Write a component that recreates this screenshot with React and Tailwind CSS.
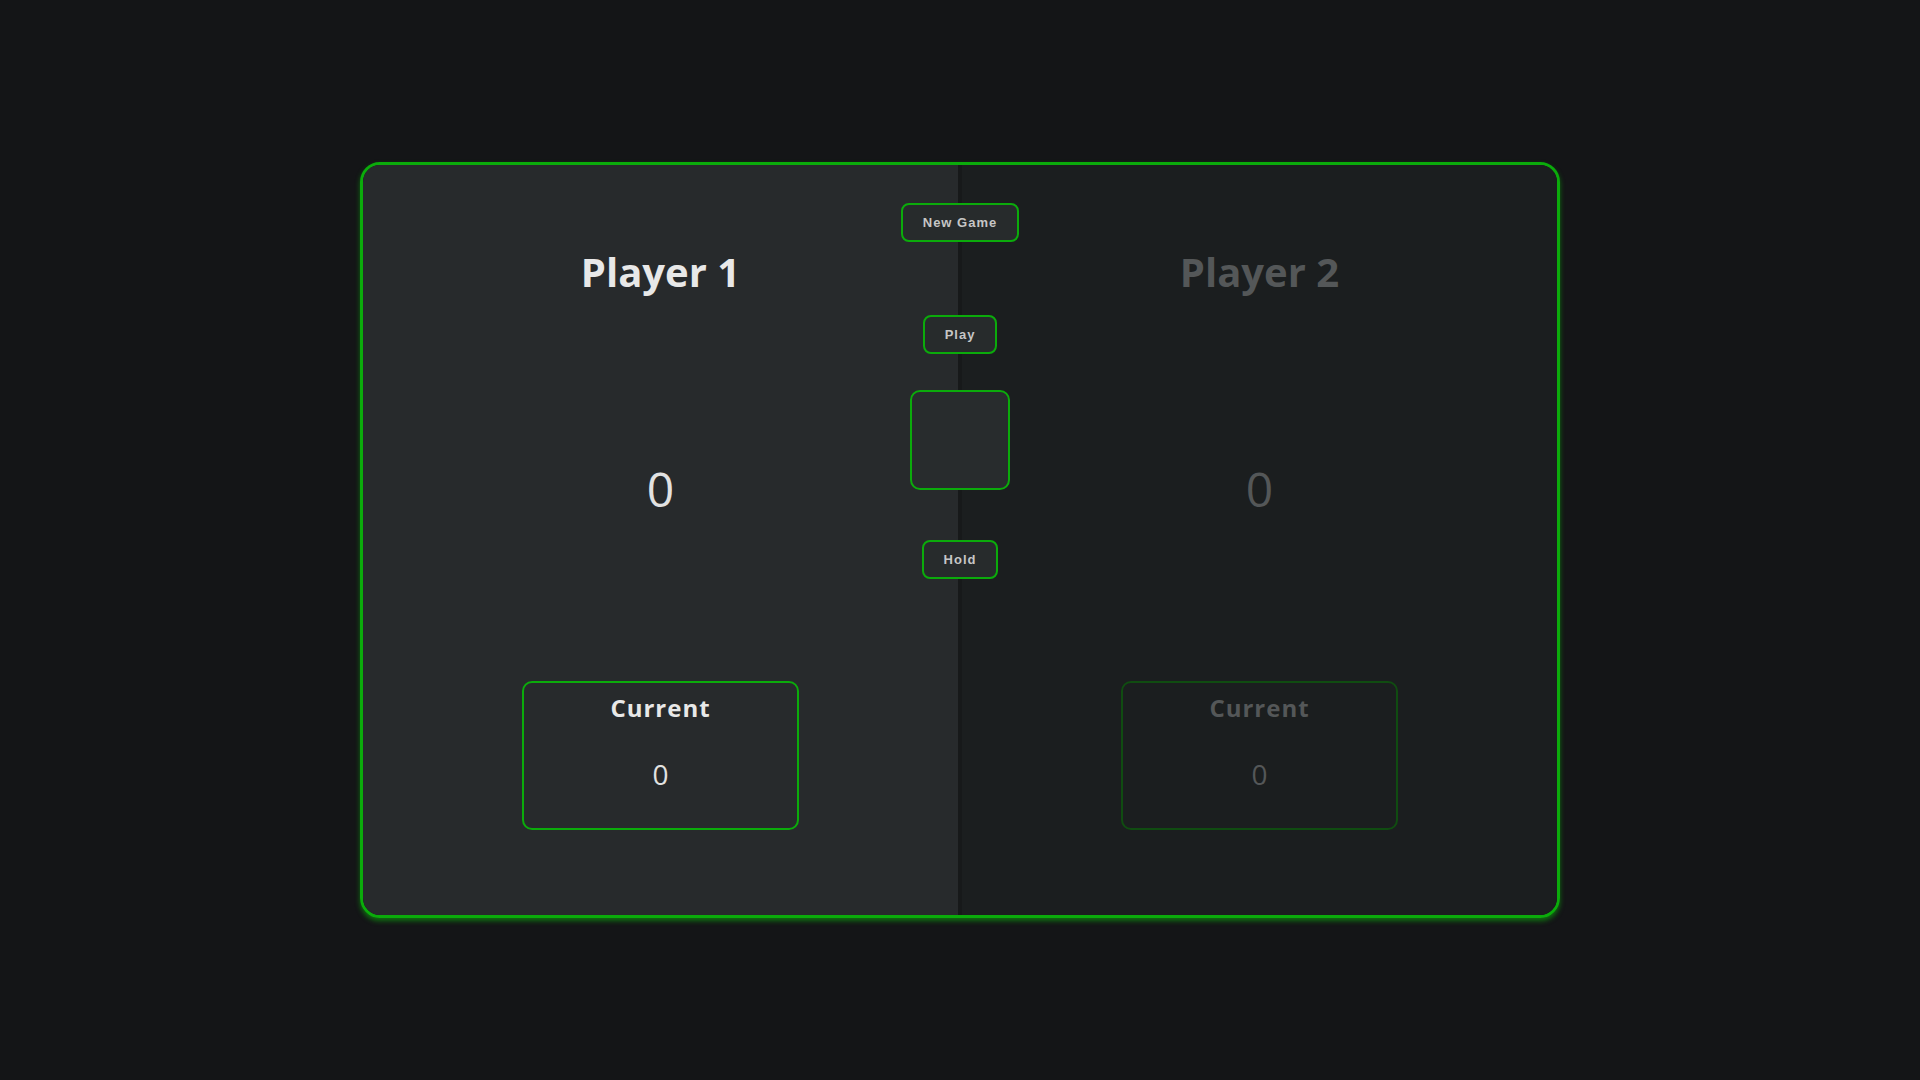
import React from 'react';

const players = [
  { name: 'Player 1', score: 0, current: 0, active: true },
  { name: 'Player 2', score: 0, current: 0, active: false },
];

const PlayerPanel = ({ player }) => {
  const on = player.active;
  return (
    <section
      className={`flex-1 flex flex-col items-center ${on ? 'bg-[#272a2c]' : 'bg-[#1b1e1f]'}`}
    >
      <h2
        className={`mt-[87px] text-[40px] leading-none font-bold font-['Open_Sans',sans-serif] ${on ? 'text-[#e8e8e8]' : 'text-[#545758]'}`}
      >
        {player.name}
      </h2>
      <p
        className={`mt-[173px] text-[48px] leading-none font-['Open_Sans',sans-serif] ${on ? 'text-[#e2e2e2]' : 'text-[#545758]'}`}
      >
        {player.score}
      </p>
      <div
        className={`mt-[168px] w-[277px] h-[149px] rounded-[10px] border-2 flex flex-col items-center ${on ? 'border-[#0bab0b]' : 'border-[#104c11]'}`}
      >
        <p
          className={`mt-[13px] text-[24px] leading-none font-bold tracking-[1px] font-['Open_Sans',sans-serif] ${on ? 'text-[#e8e8e8]' : 'text-[#545758]'}`}
        >
          Current
        </p>
        <p
          className={`mt-[40px] text-[28px] leading-none font-['Open_Sans',sans-serif] ${on ? 'text-[#e2e2e2]' : 'text-[#545758]'}`}
        >
          {player.current}
        </p>
      </div>
    </section>
  );
};

const btn =
  "h-[39px] rounded-lg border-2 border-[#0bab0b] bg-[#272b2c] text-[13px] font-bold tracking-[1px] text-[#c6c6c6] font-['Liberation_Sans',Arial,sans-serif] flex items-center justify-center";

export default function App() {
  return (
    <div className="min-h-screen w-full bg-[#141517] flex items-center justify-center">
      <main className="relative w-[1200px] h-[756px] rounded-[20px] border-[3px] border-[#0bab0b] overflow-hidden flex shadow-[0_3px_5px_rgba(11,171,11,0.6)]">
        <PlayerPanel player={players[0]} />
        <div className="w-[4px] bg-[#17191a]" />
        <PlayerPanel player={players[1]} />

        {/* controls sit over the split */}
        <div className="absolute top-[38px] left-1/2 -translate-x-1/2 flex flex-col items-center">
          <button className={`${btn} w-[118px]`}>New Game</button>
          <button className={`${btn} w-[74px] mt-[73px]`}>Play</button>
          <div className="mt-[36px] w-[100px] h-[100px] rounded-[10px] border-2 border-[#0bab0b] bg-[#282c2d]" />
          <button className={`${btn} w-[76px] mt-[50px]`}>Hold</button>
        </div>
      </main>
    </div>
  );
}
